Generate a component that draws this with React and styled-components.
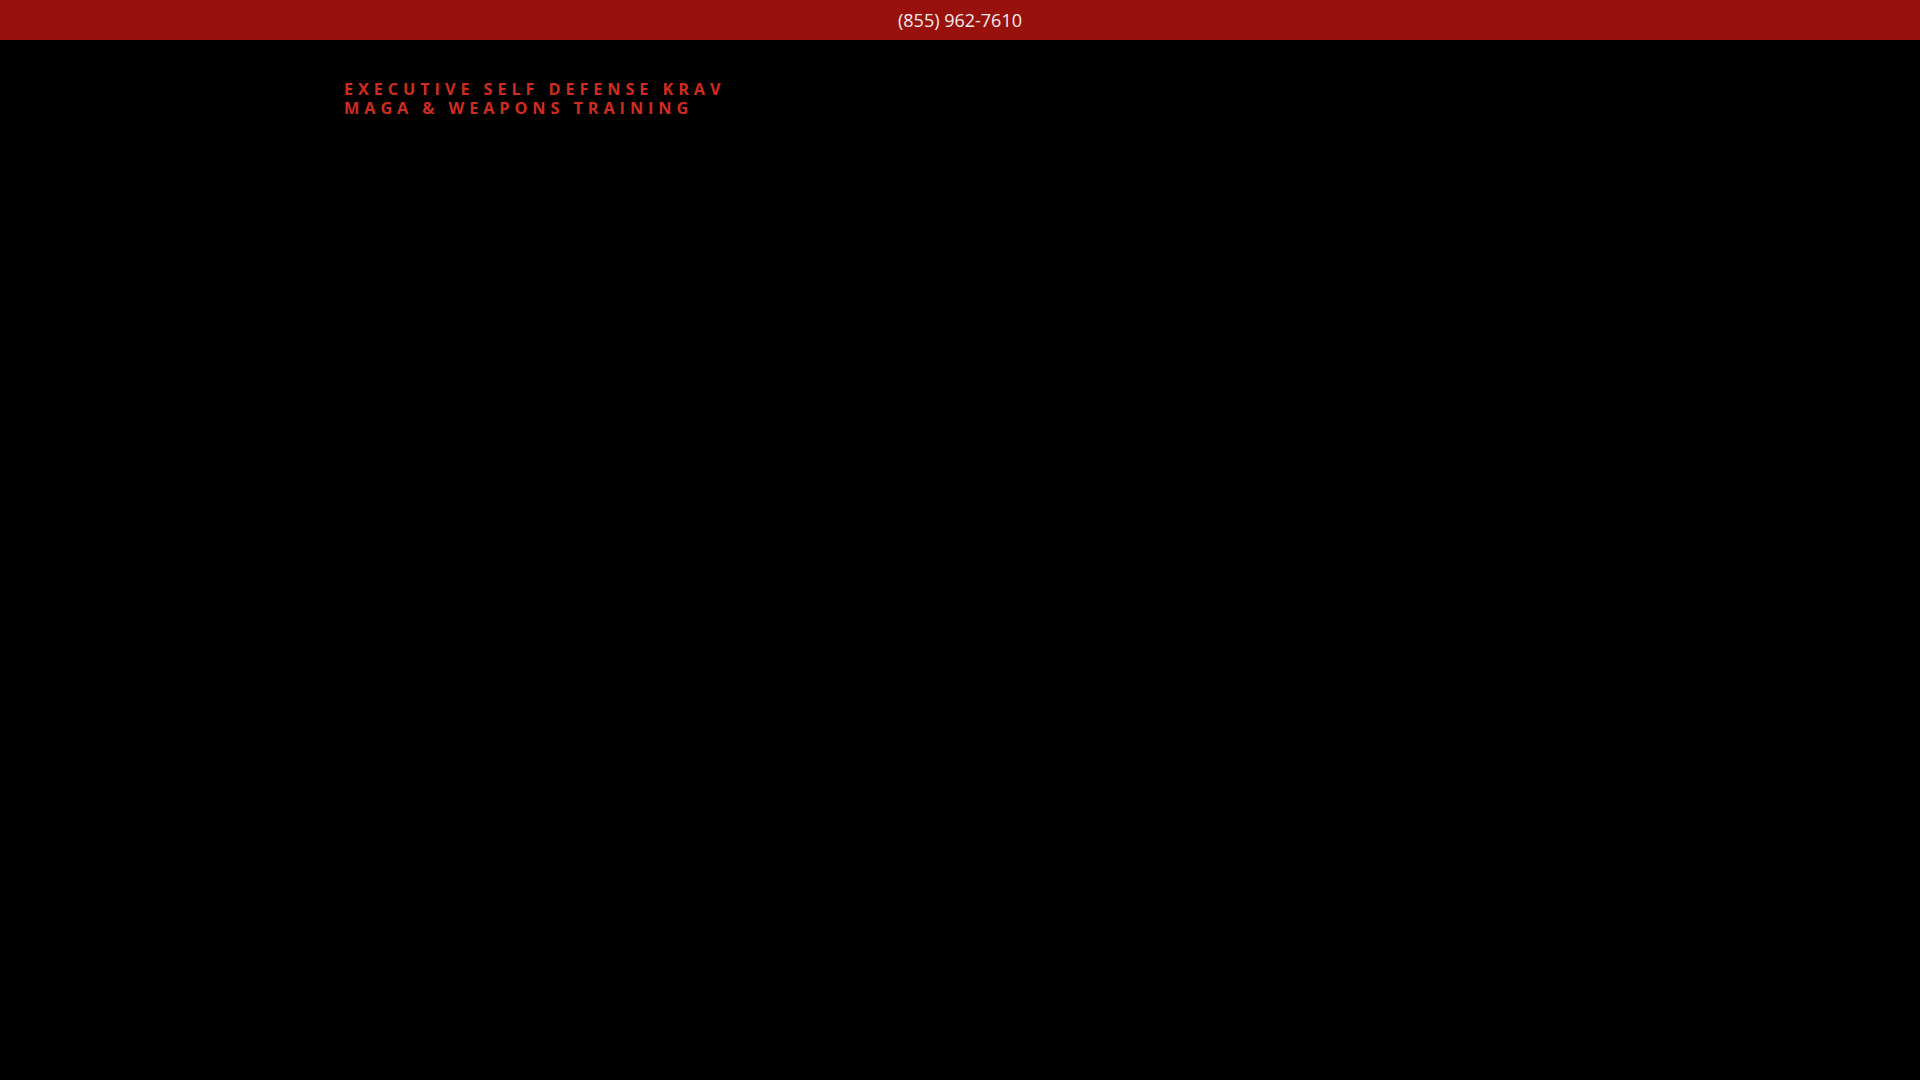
import React from "react";
import styled, { createGlobalStyle } from "styled-components";

const Global = createGlobalStyle`
  html, body { margin: 0; padding: 0; background: #000; }
  body { font-family: "Open Sans", "Liberation Sans", sans-serif; }
`;

const Page = styled.div`
  min-height: 100vh;
  background: #000;
  display: flex;
  flex-direction: column;
`;

const TopBar = styled.div`
  height: 40px;
  background: #98110c;
  display: flex;
  align-items: center;
  justify-content: center;
`;

const Phone = styled.a`
  color: #f4eeee;
  font-size: 18px;
  font-family: "Open Sans", "Liberation Sans", sans-serif;
  text-decoration: none;
`;

const Header = styled.header`
  padding: 40px 0 0 344px;
`;

const Brand = styled.div`
  width: 410px;
  color: #cf2c1f;
  font-family: "Open Sans", "Liberation Sans", sans-serif;
  font-weight: 700;
  font-size: 16.3px;
  line-height: 19px;
  letter-spacing: 4.9px;
  text-transform: uppercase;
`;

export default function App() {
  return (
    <Page>
      <Global />
      <TopBar>
        <Phone href="#">(855) 962-7610</Phone>
      </TopBar>
      <Header>
        <Brand>Executive Self Defense Krav Maga &amp; Weapons Training</Brand>
      </Header>
    </Page>
  );
}
